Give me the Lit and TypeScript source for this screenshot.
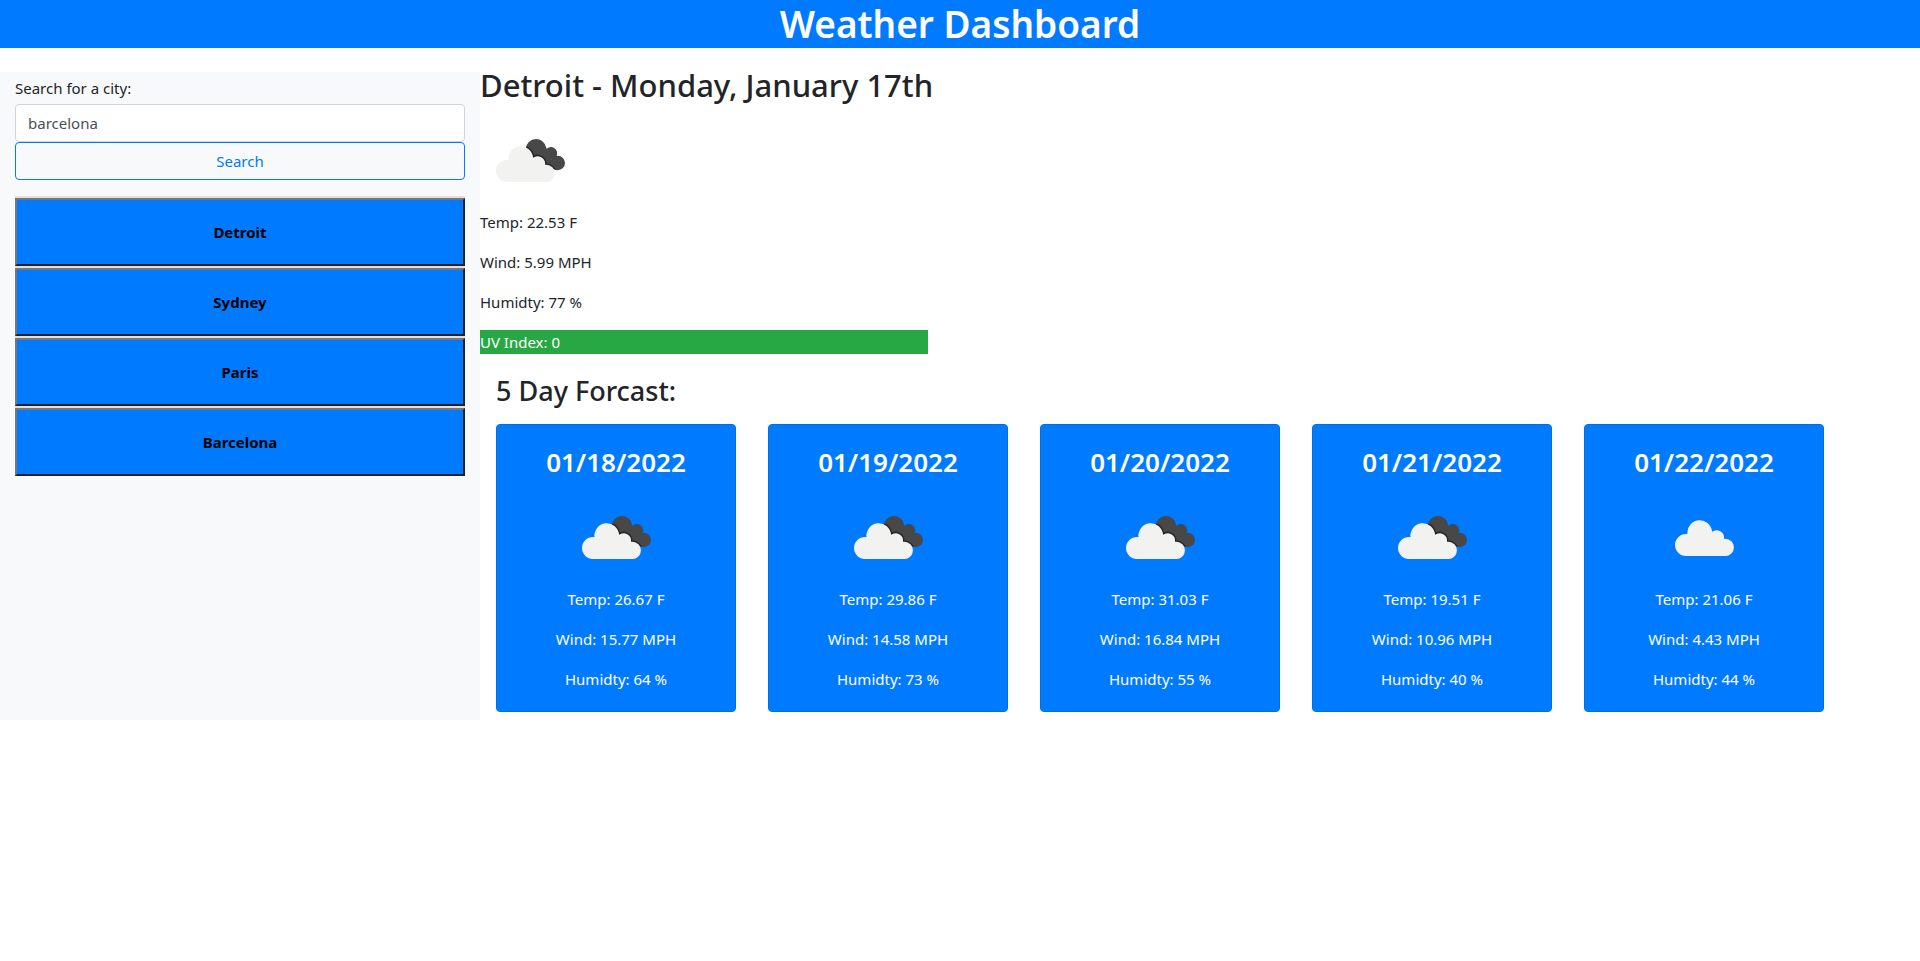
import { LitElement, html, css, svg } from "lit";
import { customElement, property, state } from "lit/decorators.js";

type Sky = "broken" | "scattered";

interface Reading {
  sky: Sky;
  temp: string;
  wind: string;
  humidity: string;
}

interface ForecastDay extends Reading {
  date: string;
}

const FORECAST: ForecastDay[] = [
  { date: "01/18/2022", sky: "broken", temp: "26.67", wind: "15.77", humidity: "64" },
  { date: "01/19/2022", sky: "broken", temp: "29.86", wind: "14.58", humidity: "73" },
  { date: "01/20/2022", sky: "broken", temp: "31.03", wind: "16.84", humidity: "55" },
  { date: "01/21/2022", sky: "broken", temp: "19.51", wind: "10.96", humidity: "40" },
  { date: "01/22/2022", sky: "scattered", temp: "21.06", wind: "4.43", humidity: "44" },
];

const CLOUD =
  "M32 69a11 11 0 0 1 0-22h1.5a12.3 12.3 0 1 1 24.5-2.8v.6a7.5 7.5 0 0 1 12 6.9h1.3a8.65 8.65 0 0 1 0 17.3z";

@customElement("weather-icon")
export class WeatherIcon extends LitElement {
  static styles = css`
    :host {
      display: inline-block;
      width: 100px;
      height: 100px;
    }
    .icon {
      display: block;
      width: 100%;
      height: 100%;
    }
  `;

  @property() sky: Sky = "broken";

  render() {
    return html`<svg class="icon" viewBox="0 0 100 100" aria-hidden="true">
      ${this.sky === "broken"
        ? svg`
          <defs>
            <clipPath id="back">
              <circle cx="56" cy="39.2" r="10.2" />
              <circle cx="71" cy="43.3" r="6.2" />
              <circle cx="77.8" cy="53" r="7.2" />
              <path d="M50 40L66 37L70 48L78 60L68 58Z" />
            </clipPath>
          </defs>
          <g clip-path="url(#back)">
            <rect x="40" y="25" width="50" height="40" fill="#484849" />
            <path d=${CLOUD} transform="translate(-5 3)" fill="none" stroke="#29292b" stroke-width="3" />
          </g>
          <path d=${CLOUD} transform="translate(-5 3)" fill="#f2f2f1" />`
        : svg`<path d=${CLOUD} fill="#f2f2f1" />`}
    </svg>`;
  }
}

@customElement("app-root")
export class AppRoot extends LitElement {
  static styles = css`
    :host {
      display: block;
      color: #212529;
      background: #fff;
      font-family: "Segoe UI", "Noto Sans", "Open Sans", sans-serif;
      font-size: 15px;
      line-height: 24px;
    }
    *,
    *::before,
    *::after {
      box-sizing: border-box;
    }
    h1,
    h2,
    h3,
    p,
    ul {
      margin: 0;
      padding: 0;
    }
    .header {
      background: #007bff;
      color: #fff;
      text-align: center;
      margin-bottom: 16px;
    }
    .title {
      font-size: 37px;
      line-height: 48px;
      font-weight: 600;
    }
    .layout {
      display: grid;
      grid-template-columns: 1fr 3fr;
    }
    .sidebar {
      background: #f8f9fa;
      margin-top: 8px;
      padding: 4px 15px;
    }
    .search {
      display: flex;
      flex-direction: column;
      margin-bottom: 16px;
    }
    .label {
      margin-bottom: 4px;
    }
    .field,
    .submit {
      font: inherit;
      height: 38px;
      padding: 6px 12px;
      border-radius: 4px;
    }
    .field {
      width: 100%;
      color: #495057;
      background: #fff;
      border: 1px solid #ced4da;
    }
    .submit {
      color: #007bff;
      background: transparent;
      border: 1px solid #007bff;
      cursor: pointer;
    }
    .cities {
      list-style: none;
    }
    .row {
      border-top: 2px solid #e0e0e0;
    }
    .city {
      display: block;
      width: 100%;
      height: 68px;
      font: inherit;
      font-weight: 700;
      color: #000;
      background: #007bff;
      border: 2px solid;
      border-color: #767676 #212121 #212121 #767676;
      cursor: pointer;
    }
    .current {
      width: 448px;
      max-width: 100%;
      margin-bottom: 20px;
    }
    .place {
      font-size: 31px;
      line-height: 42px;
      font-weight: 500;
      margin-bottom: 4px;
      white-space: nowrap;
    }
    .current weather-icon {
      display: block;
    }
    .stat {
      margin-bottom: 16px;
    }
    .uv {
      background: #28a745;
      color: #fff;
    }
    .subtitle {
      font-size: 27px;
      line-height: 34px;
      font-weight: 500;
      margin: 0 16px 16px;
    }
    .days {
      display: flex;
      margin-bottom: 8px;
    }
    .card {
      flex: 0 0 calc(100% / 6);
      margin: 0 16px;
      background: #007bff;
      color: #fff;
      border: 1px solid #006fe6;
      border-radius: 4px;
      padding: 20px 20px 4px;
      text-align: center;
    }
    .date {
      font-size: 26px;
      line-height: 34px;
      font-weight: 600;
      margin-bottom: 8px;
    }
    .card weather-icon {
      display: block;
      margin: 0 auto;
    }
  `;

  @state() private query = "barcelona";
  @state() private cities = ["Detroit", "Sydney", "Paris", "Barcelona"];

  private onInput(e: Event) {
    this.query = (e.target as HTMLInputElement).value;
  }

  private onSubmit(e: Event) {
    e.preventDefault();
    const name = this.query.trim();
    if (!name) return;
    const city = name[0].toUpperCase() + name.slice(1);
    if (!this.cities.includes(city)) this.cities = [...this.cities, city];
  }

  private stats(r: Reading) {
    return html`
      <weather-icon .sky=${r.sky}></weather-icon>
      <p class="stat">Temp: ${r.temp} F</p>
      <p class="stat">Wind: ${r.wind} MPH</p>
      <p class="stat">Humidty: ${r.humidity} %</p>
    `;
  }

  render() {
    return html`
      <header class="header"><h1 class="title">Weather Dashboard</h1></header>
      <div class="layout">
        <aside class="sidebar">
          <form class="search" @submit=${this.onSubmit}>
            <label class="label" for="city">Search for a city:</label>
            <input class="field" id="city" type="text" .value=${this.query} @input=${this.onInput} />
            <button class="submit" type="submit">Search</button>
          </form>
          <ul class="cities">
            ${this.cities.map(
              (c) => html`<li class="row"><button class="city" type="button">${c}</button></li>`
            )}
          </ul>
        </aside>
        <main>
          <section class="current">
            <h2 class="place">Detroit - Monday, January 17th</h2>
            ${this.stats({ sky: "broken", temp: "22.53", wind: "5.99", humidity: "77" })}
            <p class="uv">UV Index: 0</p>
          </section>
          <section>
            <h3 class="subtitle">5 Day Forcast:</h3>
            <div class="days">
              ${FORECAST.map(
                (d) => html`<article class="card">
                  <h3 class="date">${d.date}</h3>
                  ${this.stats(d)}
                </article>`
              )}
            </div>
          </section>
        </main>
      </div>
    `;
  }
}
